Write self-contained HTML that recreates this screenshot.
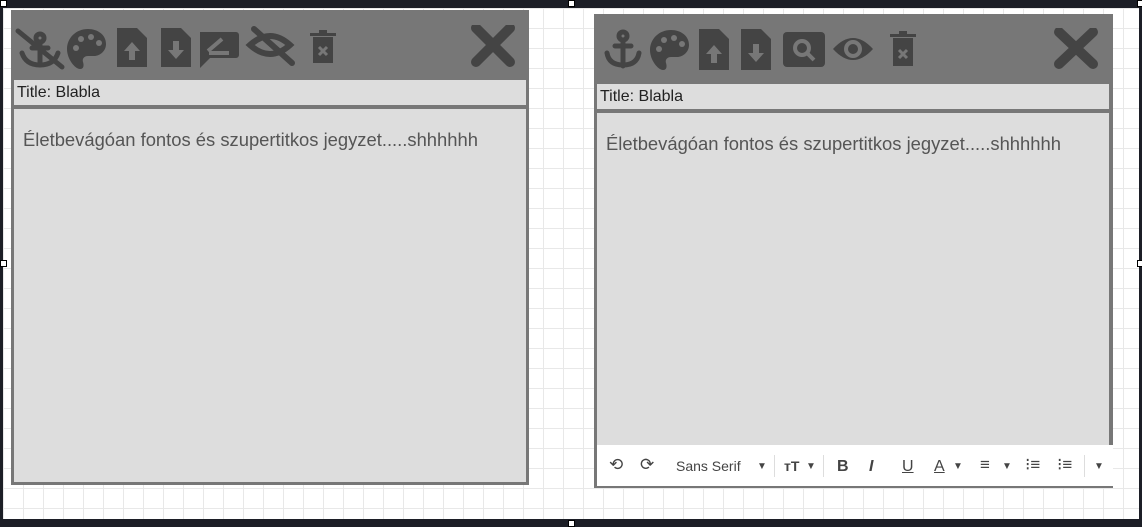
<!DOCTYPE html>
<html><head><style>
body{margin:0;width:1142px;height:526px;overflow:hidden;background:#1c1e26;position:relative;font-family:"Liberation Sans",sans-serif}
.canvas{position:absolute;left:3px;top:8px;width:1136px;height:511px;background-color:#fff;background-image:linear-gradient(#e8e8e8 1px,transparent 1px),linear-gradient(90deg,#e8e8e8 1px,transparent 1px);background-size:20px 20px}
.panel{position:absolute;background:#777}
.title{position:absolute;background:#ddd;font-size:16px;color:#222;line-height:25px;padding-left:3px;box-sizing:border-box}
.body{position:absolute;background:#ddd;font-size:18.4px;color:#555;padding:20px 9px;box-sizing:border-box}
.ic{position:absolute}
.tb{position:absolute;background:#fff;font-size:14px;color:#444}
.tb span{position:absolute;top:13px}
.h{position:absolute;width:5px;height:5px;background:#fff;border:1px solid #000}
</style></head><body>
<div class="canvas"></div>
<div class="h" style="left:0;top:0"></div><div class="h" style="left:568px;top:0"></div><div class="h" style="left:1137px;top:0"></div>
<div class="h" style="left:0;top:260px"></div><div class="h" style="left:1137px;top:260px"></div>
<div class="h" style="left:568px;top:520px"></div>

<div class="panel" style="left:11px;top:10px;width:518px;height:475px"></div>
<div class="title" style="left:14px;top:80px;width:512px;height:25px">Title: Blabla</div>
<div class="body" style="left:14px;top:109px;width:512px;height:373px">Életbevágóan fontos és szupertitkos jegyzet.....shhhhhh</div>
<svg class="ic" style="left:14px;top:25px" width="520" height="50" fill="#444" stroke="#444">
 <g stroke-width="5" fill="none" stroke-linecap="round"><circle cx="26" cy="13" r="4"/><path d="M26 17v22M8 28q4 12 18 12t18-12M18 23h16"/><path d="M4 6l44 36" /></g>
 <path stroke="none" d="M74 4c-12 0-21 9-21 20 0 10 8 20 13 20 4 0 4-4 3-7-1-3 1-6 5-6h6c6 0 12-5 12-12C92 10 84 4 74 4z"/>
 <g fill="#777" stroke="none"><circle cx="62" cy="23" r="3"/><circle cx="67" cy="14" r="3"/><circle cx="77" cy="12" r="3"/><circle cx="85" cy="18" r="3"/></g>
 <path stroke="none" d="M103 3h20l10 10v29h-30z"/><path stroke="none" fill="#777" d="M118 17l-8 9h5v9h6v-9h5z"/>
 <path stroke="none" d="M147 3h20l10 10v29h-30z"/><path stroke="none" fill="#777" d="M162 34l-8-9h5v-9h6v9h5z"/>
 <path stroke="none" d="M186 7h36a3 3 0 0 1 3 3v20a3 3 0 0 1-3 3h-26l-10 10z"/><path stroke="#777" stroke-width="4" d="M194 26l14-12M195 28h20"/>
 <g fill="none" stroke-width="6"><path d="M236 20q20-18 40 0q-20 18-40 0z"/><path d="M240 4l38 34" stroke-linecap="round"/></g>
 <path stroke="none" d="M296 8h26v3h-26zM305 5h8v3h-8zM299 12h20v26h-20z"/><path stroke="#777" stroke-width="3" d="M305 22l8 8M313 22l-8 8"/>
 <path fill="none" stroke-width="10" stroke-linecap="round" d="M462 3l34 34M496 3l-34 34"/>
</svg>

<div class="panel" style="left:594px;top:14px;width:519px;height:474px"></div>
<div class="title" style="left:597px;top:84px;width:512px;height:25px">Title: Blabla</div>
<div class="body" style="left:597px;top:113px;width:512px;height:335px">Életbevágóan fontos és szupertitkos jegyzet.....shhhhhh</div>
<svg class="ic" style="left:597px;top:28px" width="520" height="50" fill="#444" stroke="#444">
 <g stroke-width="5" fill="none" stroke-linecap="round"><circle cx="26" cy="8" r="4"/><path d="M26 12v26M10 25q2 12 16 12t16-12M18 18h16"/></g>
 <path stroke="none" d="M74 2c-12 0-21 9-21 20 0 10 8 20 13 20 4 0 4-4 3-7-1-3 1-6 5-6h6c6 0 12-5 12-12C92 8 84 2 74 2z"/>
 <g fill="#777" stroke="none"><circle cx="62" cy="21" r="3"/><circle cx="67" cy="12" r="3"/><circle cx="77" cy="10" r="3"/><circle cx="85" cy="16" r="3"/></g>
 <path stroke="none" d="M102 1h20l10 10v31h-30z"/><path stroke="none" fill="#777" d="M117 17l-8 9h5v9h6v-9h5z"/>
 <path stroke="none" d="M144 1h20l10 10v31h-30z"/><path stroke="none" fill="#777" d="M159 34l-8-9h5v-9h6v9h5z"/>
 <rect x="186" y="4" width="42" height="35" rx="4" stroke="none"/><circle cx="205" cy="20" r="7" fill="none" stroke="#777" stroke-width="4"/><path stroke="#777" stroke-width="4" d="M210 25l7 7"/>
 <path stroke="none" d="M236 21q20-22 40 0q-20 22-40 0z"/><circle cx="256" cy="21" r="7" fill="none" stroke="#777" stroke-width="4"/>
 <path stroke="none" d="M293 6h26v3h-26zM302 3h8v3h-8zM296 10h20v28h-20z"/><path stroke="#777" stroke-width="3" d="M302 22l8 8M310 22l-8 8"/>
 <path fill="none" stroke-width="10" stroke-linecap="round" d="M462 4l34 32M496 4l-34 32"/>
</svg>

<div class="tb" style="left:597px;top:445px;width:516px;height:41px">
 <span style="left:12px;font-size:17px;top:10px">⟲</span>
 <span style="left:43px;font-size:17px;top:10px">⟳</span>
 <span style="left:79px">Sans Serif</span>
 <span style="left:160px;font-size:10px;top:16px">▼</span>
 <div style="position:absolute;left:177px;top:10px;width:1px;height:22px;background:#ddd"></div>
 <span style="left:187px;font-weight:bold">ᴛT</span><span style="left:209px;font-size:10px;top:16px">▼</span>
 <div style="position:absolute;left:226px;top:10px;width:1px;height:22px;background:#ddd"></div>
 <span style="left:240px;font-weight:bold;font-size:16px">B</span>
 <span style="left:272px;font-style:italic;font-weight:bold;font-size:16px">I</span>
 <span style="left:305px;text-decoration:underline;font-size:16px">U</span>
 <span style="left:337px;text-decoration:underline;font-size:16px">A</span><span style="left:356px;font-size:10px;top:16px">▼</span>
 <span style="left:383px;font-size:17px;top:10px">≡</span><span style="left:405px;font-size:10px;top:16px">▼</span>
 <span style="left:428px;font-size:17px;top:10px">⁝≡</span>
 <span style="left:460px;font-size:17px;top:10px">⁝≡</span>
 <div style="position:absolute;left:487px;top:10px;width:1px;height:22px;background:#ddd"></div>
 <span style="left:497px;font-size:10px;top:16px">▼</span>
</div>
</body></html>
